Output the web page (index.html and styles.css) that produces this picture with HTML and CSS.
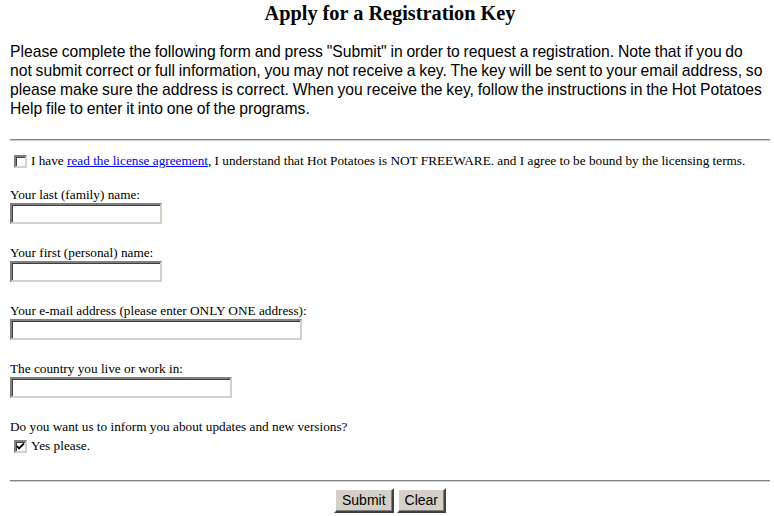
FILE: index.html
```html
<!DOCTYPE html>
<html>
<head>
<meta charset="utf-8">
<title>Apply for a Registration Key</title>
<link rel="stylesheet" href="styles.css">
</head>
<body>
<h1 class="title">Apply for a Registration Key</h1>
<p class="intro">Please complete the following form and press "Submit" in order to request a registration. Note that if you do<br>not submit correct or full information, you may not receive a key. The key will be sent to your email address, so<br>please make sure the address is correct. When you receive the key, follow the instructions in the Hot Potatoes<br>Help file to enter it into one of the programs.</p>
<hr class="rule">
<form class="form">
  <div class="check-row agree">
    <span class="box"></span>
    <span>I have <a class="link" href="#">read the license agreement</a>, I understand that Hot Potatoes is NOT FREEWARE. and I agree to be bound by the licensing terms.</span>
  </div>
  <div class="field">
    <div class="label">Your last (family) name:</div>
    <div class="input w150"></div>
  </div>
  <div class="field">
    <div class="label">Your first (personal) name:</div>
    <div class="input w150"></div>
  </div>
  <div class="field">
    <div class="label">Your e-mail address (please enter ONLY ONE address):</div>
    <div class="input w290"></div>
  </div>
  <div class="field">
    <div class="label">The country you live or work in:</div>
    <div class="input w220"></div>
  </div>
  <div class="field updates">
    <div class="label">Do you want us to inform you about updates and new versions?</div>
    <div class="check-row">
      <span class="box checked"><svg width="9" height="9" viewBox="0 0 9 9"><path d="M1 4 L3 6.5 L8 1.5" stroke="#000" stroke-width="1.8" fill="none"/></svg></span>
      <span>Yes please.</span>
    </div>
  </div>
  <hr class="rule bottom">
  <div class="buttons">
    <span class="btn">Submit</span>
    <span class="btn">Clear</span>
  </div>
</form>
</body>
</html>
```
FILE: styles.css
```css
html, body {
  margin: 0;
  padding: 0;
  background: #fff;
}
body {
  padding: 0 4px 0 10px;
  font-family: "Liberation Serif", "Times New Roman", serif;
  font-size: 13.25px;
  color: #000;
}
.title {
  margin: 0;
  padding-top: 2px;
  text-align: center;
  font-size: 20.3px;
  line-height: 23px;
  font-weight: bold;
}
.intro {
  margin: 17px 0 0 0;
  font-family: "Liberation Sans", Arial, sans-serif;
  font-size: 15.7px;
  line-height: 19px;
  word-spacing: -0.6px;
  white-space: nowrap;
}
.rule {
  margin: 21px 0 0 0;
  height: 0;
  border: 0;
  border-top: 1px solid #808080;
  border-bottom: 1px solid #d4d0c8;
}
.form {
  margin: 0;
}
.check-row {
  display: flex;
  align-items: center;
  gap: 4px;
  padding-left: 4px;
  line-height: 16px;
}
.agree {
  margin-top: 12px;
}
.box {
  display: inline-flex;
  align-items: center;
  justify-content: center;
  width: 9px;
  height: 9px;
  border: 2px solid;
  border-color: #808080 #d4d0c8 #d4d0c8 #808080;
  background: #fff;
  box-shadow: inset 1px 1px 0 #404040;
}
.field {
  margin-top: 21px;
}
.agree + .field {
  margin-top: 18px;
}
.label {
  line-height: 16px;
}
.input {
  margin-top: 0;
  height: 17px;
  border: 2px solid;
  border-color: #808080 #d4d0c8 #d4d0c8 #808080;
  box-shadow: inset 1px 1px 0 #404040;
  background: #fff;
}
.w150 { width: 148px; }
.w290 { width: 288px; }
.w220 { width: 218px; }
.updates .check-row {
  margin-top: 3px;
}
.bottom {
  margin-top: 26px;
}
.buttons {
  display: flex;
  justify-content: center;
  gap: 3px;
  margin-top: 6px;
}
.btn {
  display: inline-block;
  padding: 0 6px;
  height: 21px;
  line-height: 21px;
  font-family: "Liberation Sans", Arial, sans-serif;
  font-size: 14px;
  background: #d4d0c8;
  border: 2px solid;
  border-color: #fff #404040 #404040 #fff;
  box-shadow: inset -1px -1px 0 #808080;
}
.link {
  color: #0000ff;
  text-decoration: underline;
}
```
